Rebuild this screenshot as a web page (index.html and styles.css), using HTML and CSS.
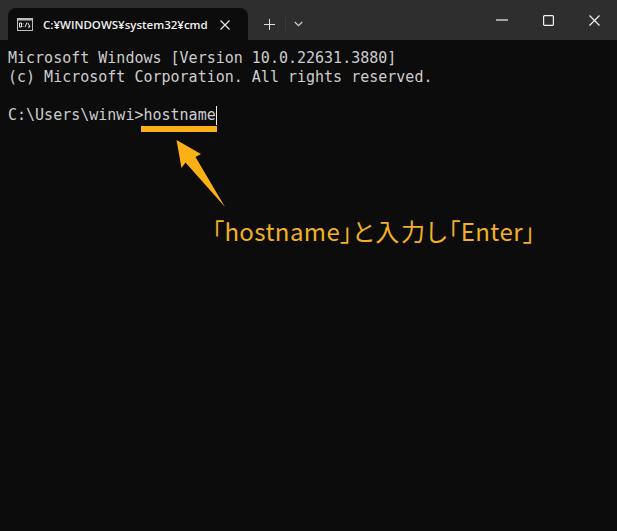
FILE: index.html
```html
<!DOCTYPE html>
<html lang="ja">
<head>
<meta charset="utf-8">
<title>cmd</title>
<link rel="stylesheet" href="styles.css">
</head>
<body>
<div class="window">
  <header class="titlebar">
    <div class="tab">
      <svg class="tab-icon" width="16" height="14" viewBox="0 0 16 14">
        <rect x="0.5" y="0.5" width="15" height="12" fill="#111" stroke="#bdbdbd"/>
        <rect x="0" y="0" width="16" height="2.5" fill="#bdbdbd"/>
        <path d="M2.5 5h2v4h-2zM6 5.500v.8M6 8v.8M8 9l2-4.500M11 5l2 4h-2" fill="none" stroke="#e8e8e8" stroke-width="1"/>
      </svg>
      <span class="tab-title">C:¥WINDOWS¥system32¥cmd</span>
      <svg class="tab-close" width="10" height="10" viewBox="0 0 10 10"><path d="M.5.5l9 9M9.500.5l-9 9" stroke="#e6e6e6" stroke-width="1.200"/></svg>
    </div>
    <div class="tab-actions">
      <svg width="11" height="11" viewBox="0 0 11 11"><path d="M5.500 0v11M0 5.500h11" stroke="#e0e0e0" stroke-width="1"/></svg>
      <span class="sep"></span>
      <svg width="9" height="6" viewBox="0 0 9 6"><path d="M.8 1l3.700 3.700L8.200 1" fill="none" stroke="#d0d0d0" stroke-width="1.200"/></svg>
    </div>
    <div class="controls">
      <svg width="12" height="2" viewBox="0 0 12 2"><path d="M0 1h12" stroke="#f2f2f2" stroke-width="1.200"/></svg>
      <svg width="11" height="11" viewBox="0 0 11 11"><rect x=".6" y=".6" width="9.800" height="9.800" rx="1" fill="none" stroke="#f2f2f2" stroke-width="1.200"/></svg>
      <svg width="11" height="11" viewBox="0 0 11 11"><path d="M.5.5l10 10M10.500.5l-10 10" stroke="#f2f2f2" stroke-width="1.200"/></svg>
    </div>
  </header>
  <main class="console">
    <div class="line">Microsoft Windows [Version 10.0.22631.3880]</div>
    <div class="line">(c) Microsoft Corporation. All rights reserved.</div>
    <div class="line">&nbsp;</div>
    <div class="line">C:\Users\winwi&gt;hostname<span class="cursor"></span></div>
  </main>
  <div class="underline"></div>
  <svg class="arrow" width="52" height="72" viewBox="0 0 52 72">
    <path d="M.5 1L25 15L19.500 18L49 68L9.500 23.500L5.500 29Z" fill="#fbb116"/>
  </svg>
  <div class="callout">「hostname」<span class="callout-jp">と入力し</span>「Enter」</div>
</div>
</body>
</html>
```
FILE: styles.css
```css
* { box-sizing: border-box; }
html, body { margin: 0; padding: 0; background: #0c0c0c; }
.window {
  position: relative;
  width: 617px;
  height: 531px;
  background: #0c0c0c;
  overflow: hidden;
}
.titlebar {
  display: flex;
  align-items: flex-end;
  height: 40px;
  padding-left: 8px;
  background: #2e2e2e;
}
.tab {
  display: flex;
  align-items: center;
  width: 240px;
  height: 32px;
  padding: 2px 0 0 9px;
  background: #0c0c0c;
  border-radius: 8px 8px 0 0;
}
.tab-icon { flex: none; }
.tab-title {
  margin-left: 10px;
  width: 177px;
  font: 600 11.5px/16px "Open Sans", "Noto Sans CJK JP", sans-serif;
  color: #f0f0f0;
  white-space: nowrap;
}
.tab-close { flex: none; }
.tab-actions {
  display: flex;
  align-items: center;
  height: 32px;
  margin-left: 16px;
}
.sep { width: 1px; height: 16px; margin: 0 8px 0 10px; background: #3a3a3a; }
.controls {
  display: flex;
  align-items: center;
  gap: 35px;
  height: 40px;
  margin-left: auto;
  padding-right: 17px;
}
.console {
  padding: 9px 0 0 8px;
  font: 15px/19px "DejaVu Sans Mono", monospace;
  color: #cccccc;
}
.line { height: 19px; white-space: pre; }
.cursor {
  display: inline-block;
  width: 1px;
  height: 19px;
  background: #f0f0f0;
  vertical-align: -5px;
}
.underline {
  position: absolute;
  left: 141px;
  top: 126px;
  width: 76px;
  height: 6px;
  background: #fbb116;
}
.arrow { position: absolute; left: 176px; top: 139px; }
.callout {
  position: absolute;
  left: 212px;
  top: 216px;
  font: 400 24px/30px "Noto Sans CJK JP", "Noto Sans", sans-serif;
  font-feature-settings: "palt";
  letter-spacing: 0.4px;
  color: #f2b022;
  white-space: nowrap;
}
.callout-jp { letter-spacing: 1.6px; }
```
